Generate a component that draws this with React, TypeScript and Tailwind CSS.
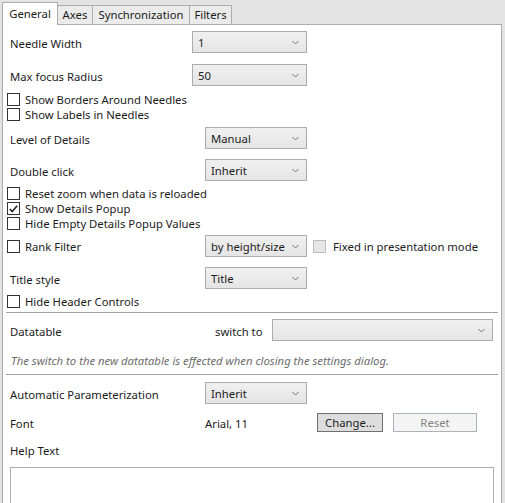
import * as React from "react";

function Chevron() {
  return (
    <svg width="7" height="5" viewBox="0 0 7 5" className="shrink-0">
      <polyline points="0.5,1 3.5,4 6.5,1" fill="none" stroke="#707070" strokeWidth="1" />
    </svg>
  );
}

function Combo({ value = "", className = "" }: { value?: string; className?: string }) {
  return (
    <div
      className={
        "flex h-[22px] items-center justify-between border border-[#acacac] bg-gradient-to-b from-[#f0f0f0] to-[#e5e5e5] pl-[5px] pr-[7px] " +
        className
      }
    >
      <span className="pt-[2px] leading-none">{value}</span>
      <Chevron />
    </div>
  );
}

function Box({ checked = false, disabled = false }: { checked?: boolean; disabled?: boolean }) {
  return (
    <div
      className={
        "flex h-[13px] w-[13px] shrink-0 items-center justify-center border " +
        (disabled ? "border-[#bcbcbc] bg-[#e6e6e6]" : "border-[#333333] bg-white")
      }
    >
      {checked && (
        <svg width="9" height="8" viewBox="0 0 9 8">
          <polyline points="0.8,4 3.2,6.5 8.2,0.8" fill="none" stroke="#222" strokeWidth="1.6" />
        </svg>
      )}
    </div>
  );
}

function Check({ label, checked = false, className = "" }: { label: string; checked?: boolean; className?: string }) {
  return (
    <div className={"flex h-[15px] items-center pl-[4px] " + className}>
      <Box checked={checked} />
      <span className="ml-[5px] pt-[1px] leading-none">{label}</span>
    </div>
  );
}

function Row({ label, wide = false, value, className = "" }: { label: string; wide?: boolean; value: string; className?: string }) {
  return (
    <div className={"flex h-[22px] items-center " + className}>
      <span className={(wide ? "w-[189px]" : "w-[202px]") + " shrink-0 pl-[7px] pt-[3px] leading-none"}>{label}</span>
      <Combo value={value} className={wide ? "w-[115px]" : "w-[102px]"} />
    </div>
  );
}

export default function App() {
  return (
    <div className="h-[503px] w-[505px] overflow-hidden bg-[#e3e3e3] font-['Noto_Sans',sans-serif] text-[11.3px] text-[#1b1b1b]">
      <div className="flex h-[24px] items-end pl-[2px]">
        <div className="relative z-10 -mb-px flex h-[23px] w-[56px] items-center justify-center border border-b-0 border-[#acacac] bg-white pt-[1px]">
          General
        </div>
        <div className="flex h-[19px] w-[35px] items-center justify-center border-t border-r border-[#acacac] bg-[#ebebeb] pt-[1px]">
          Axes
        </div>
        <div className="flex h-[19px] w-[97px] items-center justify-center border-t border-r border-[#acacac] bg-[#ebebeb] pt-[1px]">
          Synchronization
        </div>
        <div className="flex h-[19px] w-[42px] items-center justify-center border-t border-r border-[#acacac] bg-[#ebebeb] pt-[1px]">
          Filters
        </div>
      </div>
      <div className="ml-[2px] h-[479px] w-[500px] border border-b-0 border-[#acacac] bg-white">
        <Row label="Needle Width" value="1" wide className="mt-[6px]" />
        <Row label="Max focus Radius" value="50" wide className="mt-[11px]" />
        <Check label="Show Borders Around Needles" className="mt-[6px]" />
        <Check label="Show Labels in Needles" />
        <Row label="Level of Details" value="Manual" className="mt-[5px]" />
        <Row label="Double click" value="Inherit" className="mt-[10px]" />
        <Check label="Reset zoom when data is reloaded" className="mt-[5px]" />
        <Check label="Show Details Popup" checked />
        <Check label="Hide Empty Details Popup Values" />
        <div className="mt-[4px] flex h-[22px] items-center">
          <div className="flex w-[202px] shrink-0 items-center pl-[4px]">
            <Box />
            <span className="ml-[5px] pt-[1px] leading-none">Rank Filter</span>
          </div>
          <Combo value="by height/size" className="w-[102px]" />
          <div className="ml-[6px]">
            <Box disabled />
          </div>
          <span className="ml-[7px] pt-[1px] leading-none">Fixed in presentation mode</span>
        </div>
        <Row label="Title style" value="Title" className="mt-[10px]" />
        <Check label="Hide Header Controls" className="mt-[5px]" />
        <div className="mx-[3px] mt-[3px] h-px bg-[#a0a0a0]" />
        <div className="mt-[6px] flex h-[22px] items-center">
          <span className="w-[212px] shrink-0 pl-[7px] pt-[3px] leading-none">Datatable</span>
          <span className="w-[57px] shrink-0 pt-[3px] leading-none">switch to</span>
          <Combo className="w-[221px]" />
        </div>
        <div className="mt-[11px] flex h-[16px] items-center pl-[8px] pt-[2px] italic leading-none text-[#6d6d6d]">
          The switch to the new datatable is effected when closing the settings dialog.
        </div>
        <div className="mx-[3px] mt-[6px] h-px bg-[#a0a0a0]" />
        <Row label="Automatic Parameterization" value="Inherit" className="mt-[7px]" />
        <div className="mt-[9px] flex h-[19px] items-center">
          <span className="w-[202px] shrink-0 pl-[7px] pt-[2px] leading-none">Font</span>
          <span className="w-[112px] shrink-0 pt-[2px] leading-none">Arial, 11</span>
          <div className="flex h-[19px] w-[66px] items-center justify-center border border-[#707070] bg-[#dddddd] pt-[1px] leading-none">
            Change...
          </div>
          <div className="ml-[10px] flex h-[19px] w-[84px] items-center justify-center border border-[#adb2b5] bg-[#f4f4f4] pt-[1px] leading-none text-[#838383]">
            Reset
          </div>
        </div>
        <div className="mt-[10px] flex h-[16px] items-center pl-[7px] pt-[2px] leading-none">Help Text</div>
        <div className="ml-[7px] mt-[9px] h-[60px] w-[484px] border border-[#abadb3] bg-white" />
      </div>
    </div>
  );
}
